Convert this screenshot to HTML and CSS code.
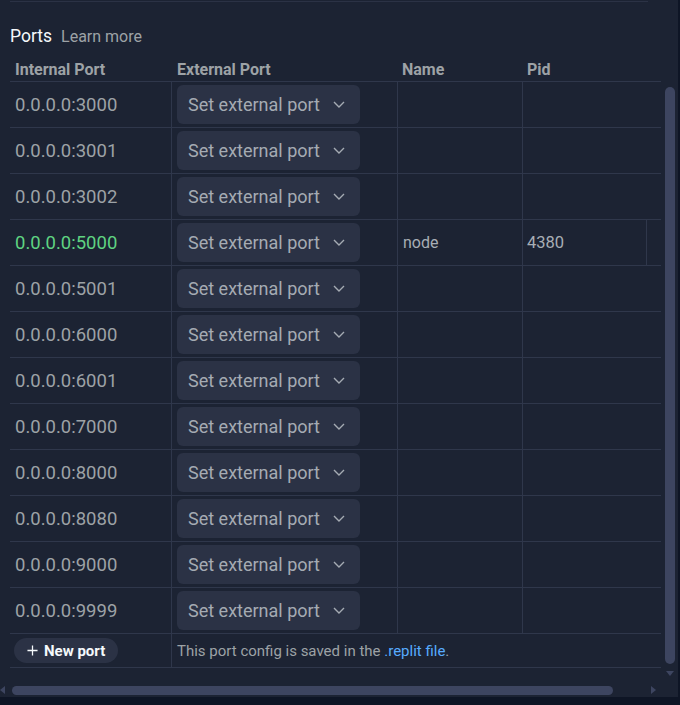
FILE: index.html
```html
<!DOCTYPE html>
<html>
<head>
<meta charset="utf-8">
<link rel="stylesheet" href="styles.css">
</head>
<body>
<div class="app">
  <div class="pane">
    <div class="topline"></div>
    <div class="title"><span class="title-main">Ports</span><a class="learn">Learn more</a></div>
    <div class="table">
      <div class="row head">
        <div class="cell">Internal Port</div>
        <div class="cell">External Port</div>
        <div class="cell">Name</div>
        <div class="cell">Pid</div>
      </div>
      <div class="row"><div class="cell port">0.0.0.0:3000</div><div class="cell"><div class="select"><span>Set external port</span><svg class="chev" viewBox="0 0 12 7"><path d="M1 1 L6 6 L11 1"/></svg></div></div><div class="cell"></div><div class="cell"></div></div>
      <div class="row"><div class="cell port">0.0.0.0:3001</div><div class="cell"><div class="select"><span>Set external port</span><svg class="chev" viewBox="0 0 12 7"><path d="M1 1 L6 6 L11 1"/></svg></div></div><div class="cell"></div><div class="cell"></div></div>
      <div class="row"><div class="cell port">0.0.0.0:3002</div><div class="cell"><div class="select"><span>Set external port</span><svg class="chev" viewBox="0 0 12 7"><path d="M1 1 L6 6 L11 1"/></svg></div></div><div class="cell"></div><div class="cell"></div></div>
      <div class="row"><div class="cell port active">0.0.0.0:5000</div><div class="cell"><div class="select"><span>Set external port</span><svg class="chev" viewBox="0 0 12 7"><path d="M1 1 L6 6 L11 1"/></svg></div></div><div class="cell info">node</div><div class="cell"><div class="pid">4380</div></div></div>
      <div class="row"><div class="cell port">0.0.0.0:5001</div><div class="cell"><div class="select"><span>Set external port</span><svg class="chev" viewBox="0 0 12 7"><path d="M1 1 L6 6 L11 1"/></svg></div></div><div class="cell"></div><div class="cell"></div></div>
      <div class="row"><div class="cell port">0.0.0.0:6000</div><div class="cell"><div class="select"><span>Set external port</span><svg class="chev" viewBox="0 0 12 7"><path d="M1 1 L6 6 L11 1"/></svg></div></div><div class="cell"></div><div class="cell"></div></div>
      <div class="row"><div class="cell port">0.0.0.0:6001</div><div class="cell"><div class="select"><span>Set external port</span><svg class="chev" viewBox="0 0 12 7"><path d="M1 1 L6 6 L11 1"/></svg></div></div><div class="cell"></div><div class="cell"></div></div>
      <div class="row"><div class="cell port">0.0.0.0:7000</div><div class="cell"><div class="select"><span>Set external port</span><svg class="chev" viewBox="0 0 12 7"><path d="M1 1 L6 6 L11 1"/></svg></div></div><div class="cell"></div><div class="cell"></div></div>
      <div class="row"><div class="cell port">0.0.0.0:8000</div><div class="cell"><div class="select"><span>Set external port</span><svg class="chev" viewBox="0 0 12 7"><path d="M1 1 L6 6 L11 1"/></svg></div></div><div class="cell"></div><div class="cell"></div></div>
      <div class="row"><div class="cell port">0.0.0.0:8080</div><div class="cell"><div class="select"><span>Set external port</span><svg class="chev" viewBox="0 0 12 7"><path d="M1 1 L6 6 L11 1"/></svg></div></div><div class="cell"></div><div class="cell"></div></div>
      <div class="row"><div class="cell port">0.0.0.0:9000</div><div class="cell"><div class="select"><span>Set external port</span><svg class="chev" viewBox="0 0 12 7"><path d="M1 1 L6 6 L11 1"/></svg></div></div><div class="cell"></div><div class="cell"></div></div>
      <div class="row"><div class="cell port">0.0.0.0:9999</div><div class="cell"><div class="select"><span>Set external port</span><svg class="chev" viewBox="0 0 12 7"><path d="M1 1 L6 6 L11 1"/></svg></div></div><div class="cell"></div><div class="cell"></div></div>
      <div class="row foot">
        <div class="cell"><button class="newport"><svg class="plus" viewBox="0 0 12 12"><path d="M6 0.5 V11.5 M0.5 6 H11.5"/></svg>New port</button></div>
        <div class="cell note">This port config is saved in the&nbsp;<a class="link">.replit file</a>.</div>
      </div>
    </div>
  </div>
  <div class="vbar">
    <div class="vthumb"></div>
    <svg class="down" viewBox="0 0 8 5"><path d="M0 0 H8 L4 5 Z"/></svg>
  </div>
  <div class="hbar">
    <svg class="left" viewBox="0 0 5 8"><path d="M5 0 V8 L0 4 Z"/></svg>
    <div class="hthumb"></div>
    <svg class="right" viewBox="0 0 5 8"><path d="M0 0 V8 L5 4 Z"/></svg>
  </div>
  <div class="corner"></div>
</div>
</body>
</html>
```
FILE: styles.css
```css
* { box-sizing: border-box; }
html, body { margin: 0; padding: 0; }
body {
  width: 680px;
  height: 705px;
  overflow: hidden;
  background: #0e1525;
  font-family: Roboto, "Liberation Sans", sans-serif;
  color: #9da2a6;
}
.app {
  width: 678px;
  height: 697px;
  background: #1c2333;
  display: grid;
  grid-template-columns: 663px 15px;
  grid-template-rows: 682px 15px;
}
.pane {
  padding-left: 10px;
  overflow: hidden;
}
.topline {
  margin-top: 1px;
  width: 638px;
  height: 1px;
  background: #2b3245;
}
.title {
  margin-top: 22px;
  height: 24px;
  display: flex;
  align-items: baseline;
  gap: 9px;
  line-height: 24px;
}
.title-main {
  font-size: 17.5px;
  color: #f5f9fc;
}
.learn {
  font-size: 16px;
  color: #9da2a6;
}
.table {
  margin-top: 9px;
  width: 651px;
}
.row {
  display: grid;
  grid-template-columns: 161px 226px 125px 139px;
  height: 46px;
  border-bottom: 1px solid #2f374b;
}
.cell {
  display: flex;
  align-items: center;
  padding-left: 5px;
  min-width: 0;
  white-space: nowrap;
}
.cell + .cell { border-left: 1px solid #2f374b; }
.head { height: 25px; }
.head .cell {
  border-left: none;
  font-size: 16px;
  font-weight: 700;
  color: #9da2a6;
  padding-left: 5px;
  padding-top: 1px;
}
.head .cell:nth-child(2) { padding-left: 6px; }
.port {
  font-size: 18.5px;
  color: #9da2a6;
}
.port.active { color: #5fd382; }
.select {
  width: 183px;
  height: 39px;
  background: #2b3245;
  border-radius: 6px;
  display: flex;
  align-items: center;
  padding-left: 11px;
  gap: 13px;
  font-size: 18px;
  color: #a5abb3;
}
.chev {
  width: 12px;
  height: 7px;
  fill: none;
  stroke: #a5abb3;
  stroke-width: 1.4;
}
.info {
  font-size: 16px;
  color: #a8aeb5;
}
.cell .pid {
  width: 120px;
  height: 100%;
  border-right: 1px solid #2f374b;
  display: flex;
  align-items: center;
  font-size: 16.5px;
  color: #a8aeb5;
  margin-left: -1px;
}
.foot {
  grid-template-columns: 161px 490px;
  height: 34px;
}
.newport {
  height: 25px;
  width: 104px;
  padding: 0 0 0 13px;
  margin-left: -1px;
  border: none;
  border-radius: 13px;
  background: #2b3245;
  color: #f5f9fc;
  font-family: inherit;
  font-size: 15px;
  font-weight: 700;
  display: flex;
  align-items: center;
  gap: 6px;
}
.plus {
  width: 11px;
  height: 11px;
  fill: none;
  stroke: #f5f9fc;
  stroke-width: 1.4;
}
.note {
  font-size: 15px;
  color: #9da2a6;
}
.link { color: #57abff; }
.vbar {
  display: flex;
  flex-direction: column;
  align-items: flex-start;
  padding-top: 87px;
  padding-left: 2px;
}
.vthumb {
  width: 10px;
  height: 577px;
  background: #3d4560;
  border-radius: 5px;
}
.down {
  width: 8px;
  height: 5px;
  margin-top: 7px;
  margin-left: 1px;
  fill: #3d4560;
}
.hbar {
  display: flex;
  align-items: center;
  padding-top: 1px;
}
.left {
  width: 5px;
  height: 8px;
  fill: #3d4560;
}
.hthumb {
  margin-left: 7px;
  width: 601px;
  height: 9px;
  background: #3d4560;
  border-radius: 5px;
}
.right {
  margin-left: 38px;
  width: 5px;
  height: 8px;
  fill: #3d4560;
}
```
